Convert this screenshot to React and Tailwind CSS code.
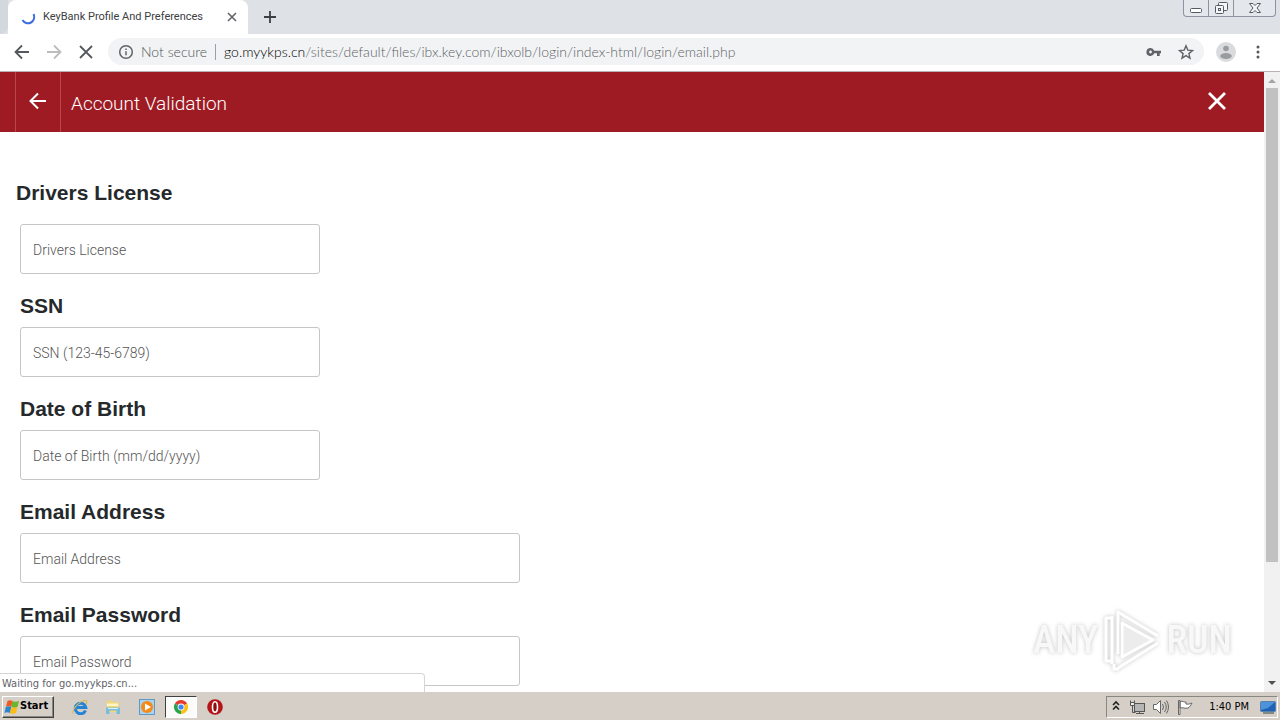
import React from "react";

const chromeText = "font-['Lato','Open_Sans',sans-serif]";
const sysText = "font-['DejaVu_Sans_Condensed','DejaVu_Sans',sans-serif]";

function TabStrip() {
  return (
    <div className="relative flex h-[34px] shrink-0 items-end bg-[#dee1e6]">
      <div className="h-full w-2 rounded-br-lg bg-[#d3d8df]" />
      <div className="flex h-full w-60 items-center rounded-t-lg bg-white pr-2 pl-3">
        <svg className="size-4 shrink-0" viewBox="0 0 16 16" fill="none" stroke="#3b6fe0" strokeWidth="2" aria-hidden="true">
          <path d="M13.500 5A6 6 0 0 1 2.500 11" />
        </svg>
        <span className="ml-[7px] flex-1 font-['Roboto',sans-serif] text-[11px] whitespace-nowrap text-[#3c4043]">
          KeyBank Profile And Preferences
        </span>
        <button type="button" aria-label="Close tab" className="grid size-4 place-items-center">
          <svg className="size-4" viewBox="0 0 16 16" stroke="#5f6368" strokeWidth="1.6" aria-hidden="true">
            <path d="M4 4l8 8M12 4l-8 8" />
          </svg>
        </button>
      </div>
      <button type="button" aria-label="New tab" className="ml-3 grid h-full w-5 place-items-center">
        <svg className="size-4" viewBox="0 0 16 16" stroke="#3c4043" strokeWidth="1.8" aria-hidden="true">
          <path d="M8 2v12M2 8h12" />
        </svg>
      </button>
      <div className="mr-1 ml-auto flex h-[17px] self-start rounded-b border border-t-0 border-[#8d93a0] bg-[#e4e7ec]">
        <button type="button" aria-label="Minimize" className="grid w-[25px] place-items-center border-r border-[#8d93a0]">
          <svg className="h-4 w-4" viewBox="0 0 16 16" fill="#fff" stroke="#555c68" aria-hidden="true">
            <rect x="2.5" y="8.5" width="11" height="4" rx="1" />
          </svg>
        </button>
        <button type="button" aria-label="Restore" className="grid w-[25px] place-items-center border-r border-[#8d93a0]">
          <svg className="h-4 w-4" viewBox="0 0 16 16" fill="#f5f6f8" stroke="#555c68" aria-hidden="true">
            <rect x="5.5" y="2.5" width="9" height="8" rx="1" />
            <rect x="2.5" y="5.5" width="8" height="8" rx="1" />
            <rect x="5.5" y="8.5" width="2" height="2" />
          </svg>
        </button>
        <button type="button" aria-label="Close window" className="grid w-[41px] place-items-center">
          <svg className="h-4 w-4" viewBox="0 0 16 16" fill="#f5f6f8" stroke="#555c68" aria-hidden="true">
            <path d="M2.500 3.500h3.500l2 2 2-2h3.500l-3.500 4.500 3.500 4.500h-3.500l-2-2-2 2h-3.500l3.500-4.500z" />
          </svg>
        </button>
      </div>
    </div>
  );
}

function Toolbar() {
  return (
    <div className="flex h-[38px] shrink-0 items-center border-b border-[#b9b0b1] bg-white pr-3.5 pb-0.5 pl-3">
      <button type="button" aria-label="Back" className="grid w-5 place-items-center">
        <svg className="size-4" viewBox="0 0 16 16" fill="none" stroke="#55595e" strokeWidth="1.8" aria-hidden="true">
          <path d="M15 8H2M8 1.500L1.500 8 8 14.500" />
        </svg>
      </button>
      <button type="button" aria-label="Forward" className="ml-3 grid w-5 place-items-center">
        <svg className="size-4" viewBox="0 0 16 16" fill="none" stroke="#babcbe" strokeWidth="1.8" aria-hidden="true">
          <path d="M1 8h13M8 1.500L14.500 8 8 14.500" />
        </svg>
      </button>
      <button type="button" aria-label="Stop loading" className="ml-3 grid w-5 place-items-center">
        <svg className="size-4" viewBox="0 0 16 16" stroke="#55595e" strokeWidth="1.8" aria-hidden="true">
          <path d="M2 2l12 12M14 2L2 14" />
        </svg>
      </button>
      <div className={`${chromeText} ml-3 flex h-[27px] min-w-0 flex-1 items-center rounded-full bg-[#f1f3f4] px-2.5 text-sm font-light`}>
        <svg className="size-4 shrink-0" viewBox="0 0 16 16" fill="none" stroke="#5f6368" strokeWidth="1.5" aria-hidden="true">
          <circle cx="8" cy="8" r="6.300" />
          <path d="M8 7.200v4M8 4.500v1.500" />
        </svg>
        <span className="ml-[7px] whitespace-nowrap text-[#4f5358]">Not secure</span>
        <span className="mx-2 h-4 w-px bg-[#9aa0a6]" />
        <span className="flex-1 truncate text-[#5f6368]">
          <span className="text-black">go.myykps.cn</span>/sites/default/files/ibx.key.com/ibxolb/login/index-html/login/email.php
        </span>
        <button type="button" aria-label="Saved passwords">
          <svg className="size-4" viewBox="0 0 16 16" fill="#5f6368" aria-hidden="true">
            <path fillRule="evenodd" d="M4.500 4a4 4 0 1 0 3.700 5.300H11V12h2.700V9.300H15V6.700H8.200A4 4 0 0 0 4.500 4zm0 2.600a1.400 1.400 0 1 1 0 2.800 1.400 1.400 0 0 1 0-2.800z" />
          </svg>
        </button>
        <button type="button" aria-label="Bookmark" className="ml-4">
          <svg className="size-4" viewBox="0 0 16 16" fill="none" stroke="#5f6368" strokeWidth="1.400" aria-hidden="true">
            <path d="M8 1.800l1.800 4.300 4.700.4-3.600 3.100 1.100 4.600L8 11.700l-4 2.500 1.100-4.600L1.500 6.500l4.700-.4z" />
          </svg>
        </button>
      </div>
      <button type="button" aria-label="Profile" className="ml-3">
        <svg className="size-5" viewBox="0 0 20 20" aria-hidden="true">
          <circle cx="10" cy="10" r="10" fill="#dadbdd" />
          <circle cx="10" cy="6.500" r="2.800" fill="#999c9f" />
          <ellipse cx="10" cy="14" rx="5.800" ry="3" fill="#999c9f" />
        </svg>
      </button>
      <button type="button" aria-label="Browser menu" className="ml-3.5">
        <svg className="size-4" viewBox="0 0 16 16" fill="#55595e" aria-hidden="true">
          <circle cx="8" cy="3" r="1.500" />
          <circle cx="8" cy="8" r="1.500" />
          <circle cx="8" cy="13" r="1.500" />
        </svg>
      </button>
    </div>
  );
}

function PageHeader() {
  return (
    <header className="flex h-15 items-stretch bg-[#9e1b24] pl-[15px] text-white">
      <button type="button" aria-label="Go back" className="grid w-[46px] place-items-center border-x border-[#b5474e]">
        <svg className="size-5" viewBox="0 0 20 20" fill="none" stroke="currentColor" strokeWidth="2" aria-hidden="true">
          <path d="M18 9H3M10 1.500L2.500 9l7.500 7.500" />
        </svg>
      </button>
      <h1 className="ml-2.5 flex-1 self-center pt-1 font-['Roboto','Liberation_Sans',sans-serif] text-[19px] leading-6 font-light">
        Account Validation
      </h1>
      <button type="button" aria-label="Close" className="mr-[35px] grid w-6 place-items-center">
        <svg className="size-6" viewBox="0 0 24 24" stroke="currentColor" strokeWidth="2.800" aria-hidden="true">
          <path d="M4 3l16 16M20 3L4 19" />
        </svg>
      </button>
    </header>
  );
}

const fields = [
  { id: "ssn", label: "SSN", hint: "SSN (123-45-6789)", type: "text", size: "max-w-75" },
  { id: "dob", label: "Date of Birth", hint: "Date of Birth (mm/dd/yyyy)", type: "text", size: "max-w-75" },
  { id: "email", label: "Email Address", hint: "Email Address", type: "text", size: "max-w-125" },
  { id: "email-pass", label: "Email Password", hint: "Email Password", type: "password", size: "max-w-125" },
];

const labelStyle = "text-[21px] leading-8 font-bold text-[#25292b]";
const inputStyle =
  "h-[50px] w-full rounded-[3px] border border-[#c6c6c6] bg-white px-3 pt-0.5 font-['Roboto','Liberation_Sans',sans-serif] text-sm font-light text-[#333] placeholder:text-[#555]";

function Fields() {
  return (
    <div className="flex flex-col gap-4 pt-[45px] font-['Liberation_Sans',Arial,sans-serif]">
      <div className="flex flex-col gap-[15px]">
        <label htmlFor="license" className={`${labelStyle} pl-4`}>Drivers License</label>
        <div className="px-5">
          <input id="license" type="text" placeholder="Drivers License" autoComplete="off" className={`${inputStyle} max-w-75`} />
        </div>
      </div>
      {fields.map((f) => (
        <div key={f.id} className="flex flex-col gap-[5px] px-5">
          <label htmlFor={f.id} className={labelStyle}>{f.label}</label>
          <input id={f.id} type={f.type} placeholder={f.hint} autoComplete="off" className={`${inputStyle} ${f.size}`} />
        </div>
      ))}
    </div>
  );
}

function Scrollbar() {
  return (
    <div className="flex w-4 shrink-0 flex-col items-center bg-[#f1f1f1]" aria-hidden="true">
      <svg className="size-4 shrink-0" viewBox="0 0 16 16" fill="#a3a3a3"><path d="M4 11l4-4 4 4z" /></svg>
      <div className="w-3 grow-[474] bg-[#c1c1c1]" />
      <div className="grow-[114]" />
      <svg className="size-4 shrink-0" viewBox="0 0 16 16" fill="#505050"><path d="M4 5l4 4 4-4z" /></svg>
    </div>
  );
}

function Watermark() {
  return (
    <div className="absolute right-12 bottom-5 flex items-center gap-1 font-['Roboto_Condensed','Liberation_Sans',sans-serif] text-[38px] leading-none font-medium text-[#f8f8f8] drop-shadow-[0_0_2px_#c4c4c4]">
      <span>ANY</span>
      <svg className="h-16 w-15" viewBox="0 0 60 64" fill="none" stroke="#fff" strokeWidth="3" strokeLinejoin="round" aria-hidden="true">
        <path d="M20 15v34l31-17z" fill="#ececec" />
        <path d="M16 46V4l40 24M9 10H4v43h5M10 8v48M16 60l40-25M12 56v5h5" />
      </svg>
      <span>RUN</span>
    </div>
  );
}

function TrayIcons() {
  return (
    <>
      <svg className="h-4 w-2.5" viewBox="0 0 10 16" fill="none" stroke="#222" strokeWidth="1.600" aria-hidden="true">
        <path d="M2 6l3-3 3 3M2 10.500l3-3 3 3" />
      </svg>
      <svg className="size-4" viewBox="0 0 16 16" fill="#eee" stroke="#555" aria-hidden="true">
        <rect x="5.500" y="4.500" width="10" height="8" fill="#b5b5b5" />
        <path d="M7 14.500h8M10.500 12.500v2M1.500 1.500v4h4v-4M3.500 5.500v8h3" fill="none" />
        <path d="M1.500 3.500h4v3h-4z" />
      </svg>
      <svg className="size-4" viewBox="0 0 16 16" fill="#fff" stroke="#666" aria-hidden="true">
        <path d="M.5 5.500h3l4-4v13l-4-4h-3z" />
        <path d="M9.500 5q2 3 0 6M11.500 3q3.500 5 0 10M13.500 1.500q4 6.500 0 13" fill="none" />
      </svg>
      <svg className="size-4" viewBox="0 0 16 16" fill="#fff" stroke="#666" aria-hidden="true">
        <path d="M1.500 1.500h1.500v14h-1.500zM3 2.500c3-1 4 1 6 .5v2c2 .5 3.500 0 6-1-1 2-2 4-4 5-3 1-5-1-8 0z" />
      </svg>
    </>
  );
}

function Taskbar() {
  return (
    <div className={`${sysText} flex h-7 shrink-0 items-center border-t border-[#d4d0c8] bg-[#d5cfc8] text-[11px] text-black`}>
      <button type="button" className="ml-0.5 flex h-[22px] w-[52px] items-center border border-t-white border-r-[#404040] border-b-[#404040] border-l-white pl-px font-bold shadow-[inset_-1px_-1px_0_#8a8680]">
        <svg className="size-4 shrink-0" viewBox="0 0 16 16" aria-hidden="true">
          <path d="M3.500 2q2.500-1.500 5 0L7.300 7.800q-2-1.500-5.300 0z" fill="#ee5a24" />
          <path d="M8.500 2q3 1.500 6.500 0L13.500 8q-3 1.500-6.200-.200z" fill="#6cb52d" />
          <path d="M1.800 8q3-1.500 5.500 0L6 14q-2.500-1.500-5.500 0z" fill="#2a86d1" />
          <path d="M7.300 8q3 1.500 6 0L12 14q-3 1.500-6 0z" fill="#fdbb16" />
        </svg>
        <span>Start</span>
      </button>
      <button type="button" aria-label="Internet Explorer" className="ml-[18px]">
        <svg className="size-4" viewBox="0 0 16 16" fill="none" aria-hidden="true">
          <path d="M13.500 11.500a5.300 5.300 0 1 1 .3-3H5" stroke="#2384d6" strokeWidth="3" />
          <path d="M1.500 14.500C-1 12 6 3 12.500 1.500c3-.5 2.500 2 1.500 4" stroke="#d9b85a" strokeWidth="1.200" />
        </svg>
      </button>
      <button type="button" aria-label="File Explorer" className="ml-[17px]">
        <svg className="size-4" viewBox="0 0 16 16" aria-hidden="true">
          <path d="M2 1.500h5l1 1.500h6V13H1z" fill="#efd67a" />
          <path d="M2 4.500h11V7H2z" fill="#fff6c8" />
          <path d="M1 8.500h14V15h-3.500v-3.500h-7V15H1z" fill="#79bddf" />
          <path d="M3 9.500h10" stroke="#d8f0fa" />
        </svg>
      </button>
      <button type="button" aria-label="Media Player" className="ml-[18px]">
        <svg className="size-4" viewBox="0 0 16 16" aria-hidden="true">
          <rect x=".5" y=".5" width="15" height="15" fill="#a9d2ef" stroke="#5f9ac7" />
          <circle cx="8" cy="8" r="6" fill="#f58a14" />
          <path d="M6 4.500v7L12 8z" fill="#fff" />
        </svg>
      </button>
      <button type="button" aria-label="Chrome" className="ml-2.5 grid h-[22px] w-8 place-items-center border border-t-[#404040] border-r-white border-b-white border-l-[#404040] bg-[#fbfbfa]">
        <svg className="size-4" viewBox="0 0 16 16" aria-hidden="true">
          <circle cx="8" cy="8" r="7" fill="#fff" />
          <path d="M8 8L1.900 4.500A7 7 0 0 1 14.100 4.500z" fill="#e33b2e" />
          <path d="M8 8l6.100-3.500A7 7 0 0 1 8 15z" fill="#fbc116" />
          <path d="M8 8v7A7 7 0 0 1 1.900 4.500z" fill="#2ba24c" />
          <circle cx="8" cy="8" r="3.400" fill="#fff" />
          <circle cx="8" cy="8" r="2.600" fill="#4285f4" />
        </svg>
      </button>
      <button type="button" aria-label="Opera" className="ml-2.5">
        <svg className="size-4" viewBox="0 0 16 16" aria-hidden="true">
          <circle cx="8" cy="8" r="7.800" fill="#b3151a" />
          <ellipse cx="8" cy="8" rx="2.500" ry="5.200" fill="#8c0c10" stroke="#fff" strokeWidth="1.600" />
        </svg>
      </button>
      <div className="mr-0.5 ml-auto flex h-[22px] items-center gap-2 border border-t-[#8a8680] border-r-white border-b-white border-l-[#8a8680] pr-px pl-1">
        <TrayIcons />
        <span className="ml-2 pt-0.5">1:40 PM</span>
        <svg className="ml-[3px] size-4" viewBox="0 0 16 16" aria-hidden="true">
          <rect x=".5" y="2.500" width="15" height="10" rx="1" fill="#1f62b5" stroke="#5a7fa8" />
          <path d="M1 3h14l-7 6-7 2z" fill="#4d93dc" />
          <path d="M3 14h11" stroke="#344" />
        </svg>
      </div>
    </div>
  );
}

export default function App() {
  return (
    <div className="flex h-screen flex-col overflow-hidden bg-white">
      <TabStrip />
      <Toolbar />
      <div className="relative flex min-h-0 flex-1">
        <main className="min-w-0 flex-1 overflow-hidden">
          <PageHeader />
          <Fields />
        </main>
        <Scrollbar />
        <Watermark />
        <div className={`${sysText} absolute bottom-0 left-0 h-[19px] w-[425px] rounded-tr border-t border-r border-[#d5d5d5] bg-white pl-0.5 text-[11px] leading-[19px] text-[#5f6368]`}>
          Waiting for go.myykps.cn...
        </div>
      </div>
      <Taskbar />
    </div>
  );
}
